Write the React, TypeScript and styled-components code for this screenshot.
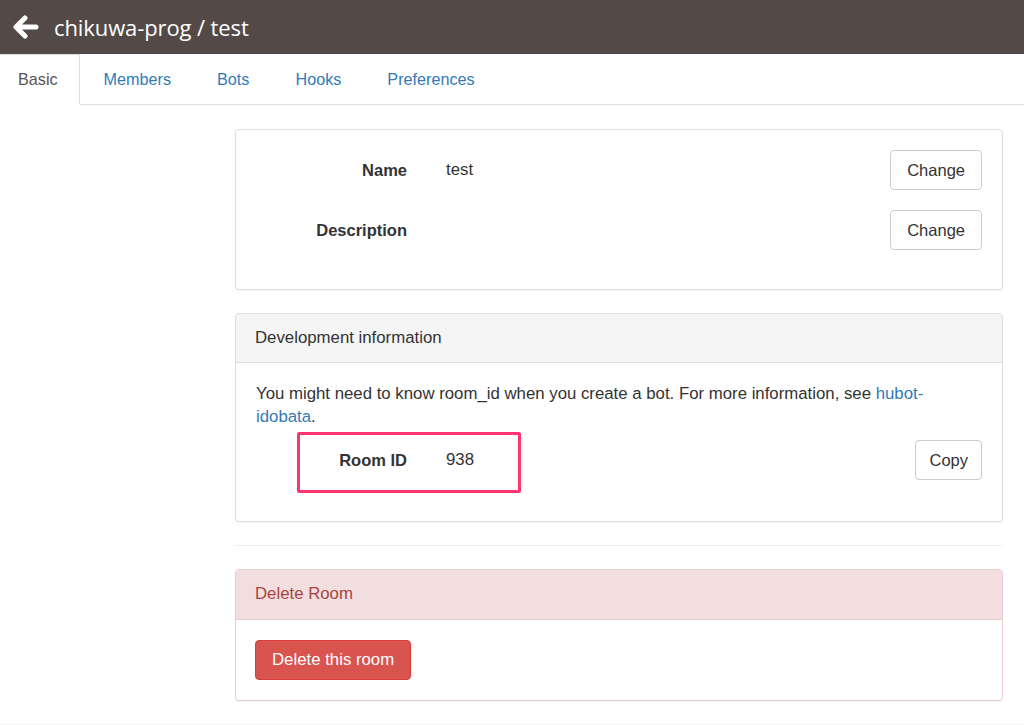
import React from "react";
import styled, { createGlobalStyle } from "styled-components";

const Global = createGlobalStyle`
  html, body { margin: 0; padding: 0; background: #fff; }
  body { font-family: "Liberation Sans", Arial, sans-serif; font-size: 16.8px; line-height: 23px; color: #333; }
  * { box-sizing: border-box; }
`;

const Header = styled.header`
  height: 54px;
  background: #534a47;
  display: flex;
  align-items: center;
  padding-left: 13px;
  gap: 15px;
`;

const Title = styled.h1`
  margin: 0;
  color: #fff;
  font-family: "Open Sans", "Liberation Sans", sans-serif;
  font-weight: 500;
  font-size: 22px;
  letter-spacing: -0.1px;
`;

const Tabs = styled.nav`
  display: flex;
  height: 51px;
  border-bottom: 1px solid #ddd;
`;

const Tab = styled.a<{ $active?: boolean; $first?: boolean }>`
  display: flex;
  align-items: center;
  padding: 0 21px 0 ${(p) => (p.$first ? "17px" : "21px")};
  margin-right: 2px;
  margin-bottom: -1px;
  font-size: 16.2px;
  color: ${(p) => (p.$active ? "#555" : "#337ab7")};
  background: ${(p) => (p.$active ? "#fff" : "transparent")};
  border: 1px solid ${(p) => (p.$active ? "#ddd" : "transparent")};
  border-left-color: transparent;
  border-bottom-color: transparent;
  text-decoration: none;
`;

const Main = styled.main`
  margin-left: 235px;
  width: 768px;
  padding-top: 24px;
`;

const Panel = styled.section<{ $danger?: boolean }>`
  border: 1px solid ${(p) => (p.$danger ? "#ebccd1" : "#ddd")};
  border-radius: 4px;
  box-shadow: 0 1px 1px rgba(0, 0, 0, 0.05);
  margin-bottom: 23px;
  background: #fff;
  overflow: hidden;
`;

const PanelHeading = styled.div<{ $danger?: boolean }>`
  padding: 12px 19px ${(p) => (p.$danger ? 14 : 13)}px;
  background: ${(p) => (p.$danger ? "#f2dede" : "#f5f5f5")};
  color: ${(p) => (p.$danger ? "#a94442" : "#333")};
  border-bottom: 1px solid ${(p) => (p.$danger ? "#ebccd1" : "#ddd")};
`;

const PanelBody = styled.div<{ $bottom?: number }>`
  padding: 20px 20px ${(p) => p.$bottom ?? 20}px;
  position: relative;
`;

const FormRow = styled.div`
  display: grid;
  grid-template-columns: 151px 1fr auto;
  column-gap: 39px;
  align-items: center;
  margin-bottom: 20px;
  min-height: 40px;
`;

const Label = styled.div`
  text-align: right;
  font-weight: bold;
  font-size: 16.5px;
`;

const Value = styled.div`
  margin-top: -2px;
`;

const Button = styled.button<{ $pad?: number }>`
  height: 40px;
  padding: 0 ${(p) => p.$pad ?? 16}px;
  font-family: "Liberation Sans", Arial, sans-serif;
  font-size: 16.5px;
  color: #333;
  background: #fff;
  border: 1px solid #ccc;
  border-radius: 4px;
`;

const DangerButton = styled(Button)`
  color: #fff;
  background: #d9534f;
  border-color: #d43f3a;
  padding: 0 16px;
  font-size: 16.8px;
`;

const Text = styled.p`
  margin: -1px 0 12px;
`;

const Link = styled.a`
  color: #337ab7;
  text-decoration: none;
`;

const Highlight = styled.div`
  position: absolute;
  left: 61px;
  top: 69px;
  width: 224px;
  height: 61px;
  border: 3px solid #ff3470;
  border-radius: 2px;
  pointer-events: none;
`;

const Divider = styled.hr`
  border: 0;
  border-top: 1px solid #eee;
  margin: 0 0 23px;
`;

const DangerBody = styled.div`
  padding: 20px 19px 20px;
`;

const Footer = styled.div`
  margin-top: 21px;
  border-top: 2px solid #f6f6f6;
`;

const BackArrow = () => (
  <svg width="26" height="24" viewBox="0 0 26 24" aria-hidden>
    <path
      d="M12 3 L3 12 L12 21 M4 12 H23"
      fill="none"
      stroke="#fff"
      strokeWidth="5"
      strokeLinecap="round"
      strokeLinejoin="round"
    />
  </svg>
);

export default function App() {
  return (
    <>
      <Global />
      <Header>
        <BackArrow />
        <Title>chikuwa-prog / test</Title>
      </Header>
      <Tabs>
        <Tab $active $first>Basic</Tab>
        <Tab>Members</Tab>
        <Tab>Bots</Tab>
        <Tab>Hooks</Tab>
        <Tab>Preferences</Tab>
      </Tabs>
      <Main>
        <Panel>
          <PanelBody $bottom={19}>
            <FormRow>
              <Label>Name</Label>
              <Value>test</Value>
              <Button>Change</Button>
            </FormRow>
            <FormRow>
              <Label>Description</Label>
              <Value />
              <Button>Change</Button>
            </FormRow>
          </PanelBody>
        </Panel>
        <Panel>
          <PanelHeading>Development information</PanelHeading>
          <PanelBody $bottom={21}>
            <Text>
              You might need to know room_id when you create a bot. For more information, see{" "}
              <Link>hubot-idobata</Link>.
            </Text>
            <FormRow>
              <Label>Room ID</Label>
              <Value>938</Value>
              <Button $pad={13}>Copy</Button>
            </FormRow>
            <Highlight />
          </PanelBody>
        </Panel>
        <Divider />
        <Panel $danger>
          <PanelHeading $danger>Delete Room</PanelHeading>
          <DangerBody>
            <DangerButton>Delete this room</DangerButton>
          </DangerBody>
        </Panel>
      </Main>
      <Footer />
    </>
  );
}
